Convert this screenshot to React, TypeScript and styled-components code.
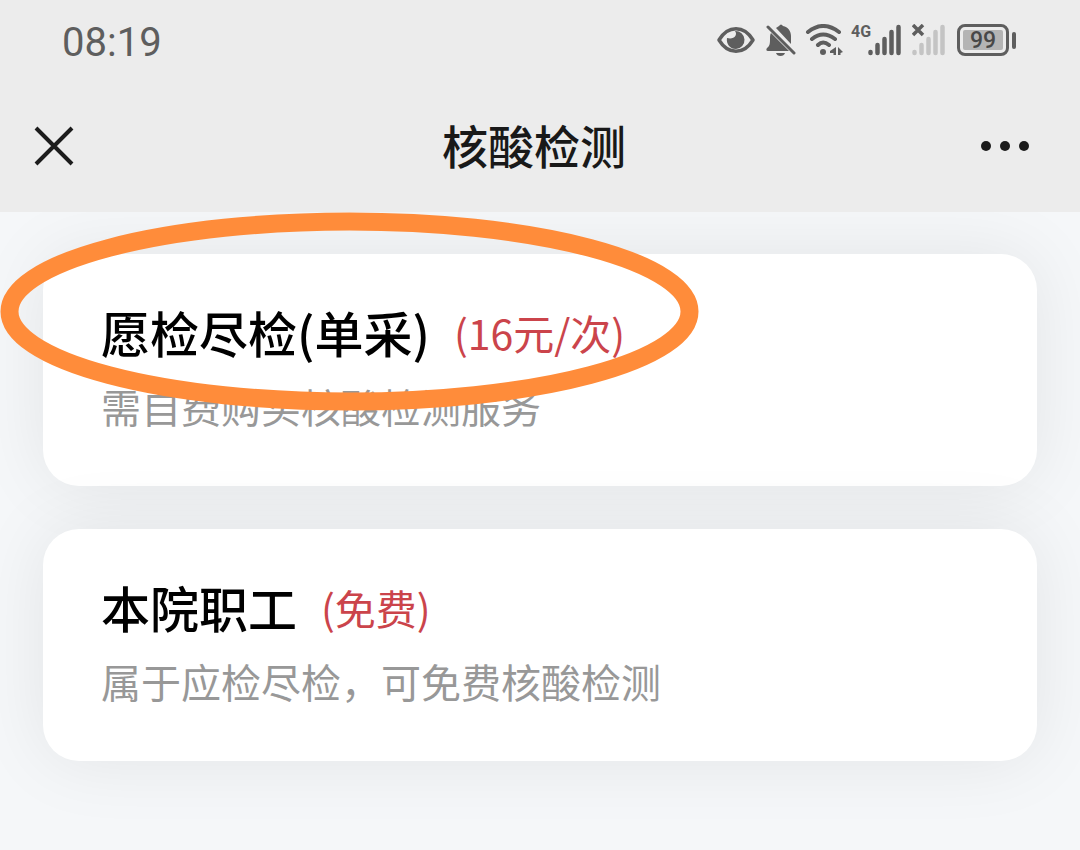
import React from 'react';
import styled, { createGlobalStyle } from 'styled-components';

const GlobalStyle = createGlobalStyle`
  *, *::before, *::after { box-sizing: border-box; }
  body {
    margin: 0;
    background: #f5f7f9;
    font-family: "Noto Sans CJK SC", "Noto Sans", sans-serif;
  }
`;

const Page = styled.div`
  min-height: 100vh;
  display: flex;
  flex-direction: column;
`;

const Header = styled.header`
  background: #ececec;
`;

const StatusBar = styled.div`
  height: 80px;
  padding: 0 64px 0 62px;
  display: flex;
  align-items: center;
  justify-content: space-between;
  color: #5e5e5e;
`;

const Clock = styled.time`
  font: 400 40px/48px Roboto, sans-serif;
  padding-top: 6px;
`;

const StatusIcons = styled.div`
  display: flex;
  align-items: flex-start;
  height: 32px;
`;

const Glyph = styled.svg<{ $gap: number }>`
  display: block;
  flex: none;
  margin-right: ${(p) => p.$gap}px;
`;

const NetworkLabel = styled.span`
  font: 700 16px/16px Roboto, sans-serif;
  width: 17px;
  white-space: nowrap;
`;

const Battery = styled.div`
  display: flex;
  align-items: center;
  gap: 3px;
`;

const BatteryCase = styled.div`
  width: 52px;
  height: 32px;
  padding: 3px;
  border: 3px solid #5e5e5e;
  border-radius: 8px;
`;

const BatteryLevel = styled.div`
  height: 20px;
  border-radius: 2px;
  background: #b4b4b4;
  color: #484848;
  font: 500 23px/21px Roboto, sans-serif;
  text-align: center;
`;

const BatteryTip = styled.div`
  width: 4px;
  height: 17px;
  border-radius: 2px;
  background: #5e5e5e;
`;

const NavBar = styled.nav`
  height: 132px;
  padding: 0 50px 0 34px;
  display: grid;
  grid-template-columns: 54px 1fr 50px;
  align-items: center;
`;

const PageTitle = styled.h1`
  margin: 0;
  padding-bottom: 4px;
  color: #191919;
  font-size: 46px;
  line-height: 64px;
  font-weight: 500;
  text-align: center;
`;

const IconButton = styled.button`
  display: flex;
  align-items: center;
  padding: 0;
  height: 64px;
  border: 0;
  background: none;
  color: #1c1c1c;
  cursor: pointer;
`;

const Content = styled.main`
  position: relative;
  flex: 1;
  padding: 42px 43px;
  display: flex;
  flex-direction: column;
  gap: 43px;
  overflow: hidden;
`;

const Card = styled.button`
  display: block;
  width: 100%;
  min-height: 232px;
  padding: 42px 58px 50px;
  border: 0;
  border-radius: 36px;
  background: #fff;
  box-shadow: 0 0 72px rgba(0, 0, 0, 0.08);
  font-family: inherit;
  text-align: left;
  cursor: pointer;
`;

const CardHeading = styled.span`
  display: flex;
  align-items: center;
  gap: 24px;
`;

const CardTitle = styled.span`
  color: #000;
  font-size: 49px;
  line-height: 72px;
  font-weight: 500;
`;

const Price = styled.span`
  color: #cb444b;
  font-size: 41px;
  line-height: 72px;
`;

const Description = styled.span`
  display: block;
  margin-top: 8px;
  color: #989898;
  font-size: 40px;
  line-height: 60px;
`;

const Marker = styled.svg`
  position: absolute;
  top: 0;
  left: 0;
  pointer-events: none;
`;

const bars = [
  { x: 2, top: 28 },
  { x: 9, top: 21 },
  { x: 16, top: 15 },
  { x: 23, top: 8 },
  { x: 30, top: 3 },
];

function SignalBars({ color, gap, missing }: { color: string; gap: number; missing?: boolean }) {
  return (
    <Glyph $gap={gap} width="33" height="32" viewBox="0 0 33 32" fill="none" strokeLinecap="round" strokeWidth="4.500" aria-hidden="true">
      {bars.map((bar) => (
        <path key={bar.x} d={`M${bar.x + 0.5} ${bar.top}V29`} stroke={color} />
      ))}
      {missing && <path d="M1 1L11 11M11 1L1 11" stroke="#5e5e5e" strokeWidth="3.500" strokeLinecap="butt" />}
    </Glyph>
  );
}

function EyeIcon() {
  return (
    <Glyph $gap={10} width="40" height="32" viewBox="0 0 40 32" aria-hidden="true">
      <path d="M3 16C12 1 28 1 37 16C28 31 12 31 3 16Z" fill="none" stroke="currentColor" strokeWidth="3.500" strokeLinejoin="round" />
      <path d="M19 7C22 11 18 16 11 14C10 20 14 25 20 25A9 9 0 0 0 19 7Z" fill="currentColor" />
    </Glyph>
  );
}

function MutedBellIcon() {
  return (
    <Glyph $gap={9} width="30" height="32" viewBox="0 0 30 32" fill="currentColor" aria-hidden="true">
      <path d="M10 4C11 3 12 3 13 2Q15 -1 17 2C22 3 25 7 25 12V20Z" />
      <path d="M5 9L23 27H2C0 27 0 25 1 24C4 22 4 19 4 15C4 12 4 11 5 9Z" />
      <path d="M10 29H19Q18 32 14.500 32Q11 32 10 29Z" />
      <path d="M2 3L28 29" stroke="currentColor" strokeWidth="3" strokeLinecap="round" />
    </Glyph>
  );
}

function WifiIcon() {
  return (
    <Glyph $gap={8} width="38" height="32" viewBox="0 0 38 32" fill="none" stroke="currentColor" strokeWidth="4" strokeLinecap="round" aria-hidden="true">
      <path d="M3 8Q18 -4 34 8M7 15Q18 6 30 15M13 21Q18 16 24 21" />
      <circle cx="18" cy="28" r="3" fill="currentColor" stroke="none" />
      <path d="M31 23V31H28.500V29H25V27ZM33 23L38 28L35.500 29V31H33Z" fill="currentColor" stroke="none" />
    </Glyph>
  );
}

interface Service {
  title: string;
  price: string;
  description: string;
}

const services: Service[] = [
  { title: '愿检尽检(单采)', price: '(16元/次)', description: '需自费购买核酸检测服务' },
  { title: '本院职工', price: '(免费)', description: '属于应检尽检，可免费核酸检测' },
];

export default function App() {
  return (
    <Page>
      <GlobalStyle />
      <Header>
        <StatusBar>
          <Clock>08:19</Clock>
          <StatusIcons>
            <EyeIcon />
            <MutedBellIcon />
            <WifiIcon />
            <NetworkLabel>4G</NetworkLabel>
            <SignalBars color="#5e5e5e" gap={11} />
            <SignalBars color="#c4c4c4" gap={12} missing />
            <Battery>
              <BatteryCase>
                <BatteryLevel>99</BatteryLevel>
              </BatteryCase>
              <BatteryTip />
            </Battery>
          </StatusIcons>
        </StatusBar>
        <NavBar>
          <IconButton aria-label="关闭">
            <svg width="40" height="40" viewBox="0 0 40 40" fill="none" stroke="currentColor" strokeWidth="4">
              <path d="M2 2L38 38M38 2L2 38" />
            </svg>
          </IconButton>
          <PageTitle>核酸检测</PageTitle>
          <IconButton aria-label="更多">
            <svg width="50" height="12" viewBox="0 0 50 12" fill="currentColor">
              <circle cx="6" cy="6" r="5" />
              <circle cx="25" cy="6" r="5" />
              <circle cx="44" cy="6" r="5" />
            </svg>
          </IconButton>
        </NavBar>
      </Header>
      <Content>
        {services.map((service) => (
          <Card key={service.title} type="button">
            <CardHeading>
              <CardTitle>{service.title}</CardTitle>
              <Price>{service.price}</Price>
            </CardHeading>
            <Description>{service.description}</Description>
          </Card>
        ))}
        <Marker width="700" height="200" viewBox="0 0 700 200" fill="none" aria-hidden="true">
          <ellipse cx="349.500" cy="99.500" rx="340" ry="90" stroke="#ff8c3a" strokeWidth="18" />
        </Marker>
      </Content>
    </Page>
  );
}
